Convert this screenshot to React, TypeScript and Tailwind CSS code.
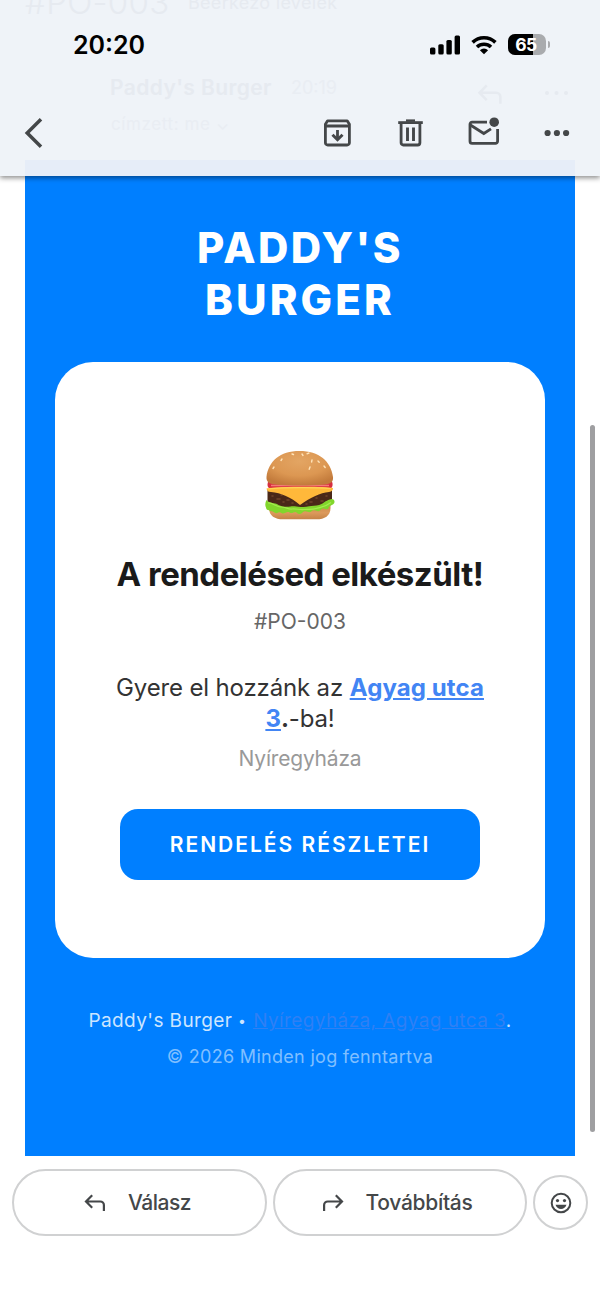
import React from "react";

const StatusIcons = () => (
  <div className="flex items-center">
    <svg width="30" height="20" viewBox="0 0 30 20" className="mr-[11px]">
      <rect x="0" y="12.5" width="5.4" height="7" rx="1.5" />
      <rect x="8.3" y="9.2" width="5.4" height="10.3" rx="1.5" />
      <rect x="16.4" y="5" width="5.4" height="14.5" rx="1.5" />
      <rect x="24.6" y="0.5" width="5.4" height="19" rx="1.5" />
    </svg>
    <svg width="26" height="20" viewBox="0 0 26 20" className="mr-[11px]">
      <g fill="none" stroke="#000" strokeWidth="3.6">
        <path d="M1.6 7.4a16.4 16.4 0 0 1 22.8 0" />
        <path d="M6 12a10.2 10.2 0 0 1 14 0" />
      </g>
      <path d="M13 19.2 8.9 15.2a5.9 5.9 0 0 1 8.2 0Z" />
    </svg>
    <div className="relative flex h-[21px] w-[38px] items-center justify-center overflow-hidden rounded-[7px] bg-[#a9abae]">
      <div className="absolute inset-y-0 left-0 w-[25px] bg-black" />
      <span className="relative right-[1px] text-[17.5px] leading-none font-bold tracking-[-0.5px] text-white">65</span>
    </div>
    <div className="ml-[2px] h-[7px] w-[2px] rounded-r-full bg-[#a9abae]" />
  </div>
);

const ArchiveIcon = () => (
  <svg width="32" height="32" viewBox="0 0 32 32" fill="none" stroke="#444749" strokeWidth="2.8">
    <path d="M3.4 7.3 5.6 3.8h19.6l2.2 3.5v18.400a2.300 2.300 0 0 1-2.300 2.300H5.700a2.300 2.300 0 0 1-2.300-2.300Z" strokeLinejoin="round" />
    <path d="M3.500 9h24M15.500 13v9.500" />
    <path d="m10.500 17.700 5 5 5-5" strokeWidth="3" />
  </svg>
);

const TrashIcon = () => (
  <svg width="32" height="32" viewBox="0 0 32 32" fill="none" stroke="#444749" strokeWidth="2.8">
    <path d="M3.2 5.600h24.600" />
    <path d="M11 3.600h9" strokeWidth="2.400" />
    <path d="M6.100 5.600v20.200a2.200 2.200 0 0 0 2.200 2.200h14.400a2.200 2.200 0 0 0 2.200-2.200V5.600" />
    <path d="M12.500 10.400v13.500M18.500 10.400v13.500" strokeWidth="2.900" />
  </svg>
);

const UnreadIcon = () => (
  <svg width="32" height="32" viewBox="0 0 32 32" fill="none" stroke="#444749" strokeWidth="2.8">
    <path d="M19 5.200H4.100a2.100 2.100 0 0 0-2.100 2.100v17a2.100 2.100 0 0 0 2.100 2.100h23.400a2.100 2.100 0 0 0 2.100-2.100V12" />
    <path d="M2.400 8 15.800 16.500 23 11.800" />
    <circle cx="26.200" cy="5.200" r="4.800" fill="#444749" stroke="none" />
  </svg>
);

const MoreIcon = () => (
  <svg width="32" height="32" viewBox="0 0 32 32" fill="#444749">
    <circle cx="6.6" cy="16" r="3.1" />
    <circle cx="15.9" cy="16" r="3.1" />
    <circle cx="25.1" cy="16" r="3.1" />
  </svg>
);

const ReplyIcon = ({ className = "" }: { className?: string }) => (
  <svg
    width="22"
    height="18"
    viewBox="0 0 22 18"
    fill="none"
    stroke="currentColor"
    strokeWidth="2.2"
    className={className}
  >
    <path d="M8.200 1.200 2 7.500l6.200 6.300M2 7.500h14.300a3.600 3.600 0 0 1 3.600 3.600v5.800" />
  </svg>
);

const Burger = () => (
  <svg width="72" height="72" viewBox="0 0 72 72">
    <defs>
      <radialGradient id="bun" cx="50%" cy="30%" r="70%">
        <stop offset="0" stopColor="#e3a563" />
        <stop offset="0.6" stopColor="#dc9752" />
        <stop offset="1" stopColor="#c27a3b" />
      </radialGradient>
      <linearGradient id="base" x1="0" y1="0" x2="0" y2="1">
        <stop offset="0" stopColor="#c98446" />
        <stop offset="0.6" stopColor="#dc9a5c" />
        <stop offset="1" stopColor="#c58345" />
      </linearGradient>
    </defs>
    <path d="M5 54h61.500v5c0 8-6 11.300-14 11.300H19C11 70.300 5 67 5 59Z" fill="url(#base)" />
    <path d="M3.500 40h64.500v12c0 4-4 6-10 6H14C8 58 3.500 56 3.500 52Z" fill="#4a2818" />
    <path
      d="M8 47h1M13 50h3M17 46h1M23 51h2M19 53h1M28 54h1M46 53h2M52 49h1M57 52h2M62 47h1M42 55h1"
      stroke="#70442b"
      strokeWidth="1.600"
      strokeLinecap="round"
    />
    <path
      d="M2.500 51c3 4 8 2 12 5 4 2 8 2 12 1.500 4-.5 6 .5 10 .5s8-.5 11-1 7-.5 10-2 5-4 10-5c3 0 4 3 2 5s-4 1-5 4-5-1-7 1-2 3-6 1.500-4 2.500-7 1.500-4-1.500-6 .5-4 2-6 0-4 2-7 0-5 2.500-8 .5-4 1.500-7-.5-3-1-5-2-3 0-3.500-3c-1-2-1-4 .5-7.500Z"
      fill="#82d62c"
    />
    <path d="M4 54c5-.5 8 4 13 4s7 2.500 11 2 8 1 12 .5 8 .5 12-1 8-.5 15-6" stroke="#a4eb4e" strokeWidth="1.200" fill="none" />
    <path d="M4.500 32h63c2 3 1 6-1 8H6c-3-2-3-5-1.500-8Z" fill="#d72e3f" />
    <path d="M7 36.500h58" stroke="#f57a78" strokeWidth="1.300" />
    <path d="M2.500 39.500C12 37.500 60 37 69 39c0 2-1 3.500-4 4-9 1-18 5-29 13-9-8-19-12-29-13-3 0-4-1-4.500-3.500Z" fill="#ffb83a" />
    <path d="M4 39.800c16-1.500 48-1.500 63-.3" stroke="#ffd457" strokeWidth="1.200" fill="none" />
    <path d="M2.500 28C4.500 12 16 2 35.500 2S67 12 69 28c.7 5-3 7-8 7.500-14 1.300-36 1.300-50 0-5-.5-9-2.500-8.500-7.500Z" fill="url(#bun)" />
    <path
      d="m18 10-1 1.500M28 5l1.500.5M38 5l1 1.500M45 4l-2 .8M54 12l1.200 1.200M10 18l-1 1.500M48 11l-.4 2M46 18l-.8 2.300M60 17l1.200 1.500"
      stroke="#ffe3b8"
      strokeWidth="1.400"
      strokeLinecap="round"
    />
  </svg>
);

const Header = () => (
  <header className="relative z-10 h-[176px] shrink-0 bg-[#eff3f8] shadow-[0_2px_5px_rgba(0,0,0,0.45)]">
    {/* message header showing through the translucent bar */}
    <div className="absolute inset-0 overflow-hidden text-[#e6eaf0]">
      <span className="absolute -top-[18px] left-[25px] text-[33px] leading-[40px] font-light tracking-[0.3px] whitespace-nowrap">
        #PO-003
      </span>
      <span className="absolute -top-[10px] left-[188px] text-[18px] leading-[26px] tracking-[0.3px] whitespace-nowrap">
        Beérkező levelek
      </span>
      <span className="absolute top-[74px] left-[110px] text-[21px] leading-[28px] font-semibold tracking-[0.4px] whitespace-nowrap">
        Paddy's Burger
      </span>
      <span className="absolute top-[75px] left-[291px] text-[18px] leading-[26px] whitespace-nowrap text-[#e9edf3]">20:19</span>
      <span className="absolute top-[111px] left-[111px] text-[17px] leading-[26px] tracking-[0.6px] whitespace-nowrap text-[#e9edf3]">
        címzett: me ⌄
      </span>
      <ReplyIcon className="absolute top-[84px] left-[476px] h-[21px] w-[28px]" />
      <svg className="absolute top-[88px] left-[544px]" width="26" height="10" viewBox="0 0 26 10" fill="currentColor">
        <circle cx="3" cy="5" r="2" />
        <circle cx="12.500" cy="5" r="2" />
        <circle cx="22" cy="5" r="2" />
      </svg>
      <div className="absolute inset-x-[25px] bottom-0 h-[16px] bg-[#e6edf8]" />
    </div>
    <div className="relative flex h-[89px] items-center justify-between pr-[50px] pl-[73px]">
      <span className="text-[25px] leading-[30px] font-semibold text-black">20:20</span>
      <StatusIcons />
    </div>
    <div className="relative flex h-[88px] items-center justify-between pr-[27px] pl-[24px]">
      <svg width="20" height="32" viewBox="0 0 20 32" fill="none" stroke="#444749" strokeWidth="3.500">
        <path d="M17 2.200 3.200 16 17 29.800" />
      </svg>
      <div className="flex gap-[41px]">
        <ArchiveIcon />
        <TrashIcon />
        <UnreadIcon />
        <MoreIcon />
      </div>
    </div>
  </header>
);

const Message = () => (
  <main className="mx-[25px] flex h-[980px] shrink-0 flex-col items-center bg-[#007fff] px-[30px] pt-[46px] text-center">
    <h1 className="text-[42px] leading-[52px] font-extrabold tracking-[2.4px] text-white">
      PADDY'S
      <br />
      <span className="tracking-[3.1px]">BURGER</span>
    </h1>
    <section className="mt-[36px] flex h-[596px] w-full flex-col items-center rounded-[38px] bg-white pt-[87px]">
      <Burger />
      <h2 className="mt-[32px] text-[33px] leading-[42px] font-bold tracking-[-0.5px] whitespace-nowrap text-[#1a1a1a]">
        A rendelésed elkészült!
      </h2>
      <p className="mt-[11px] text-[21px] leading-[32px] text-[#666]">#PO-003</p>
      <p className="mt-[34px] text-[24px] leading-[31px] tracking-[-0.15px] whitespace-nowrap text-[#333]">
        Gyere el hozzánk az{" "}
        <a href="#" className="font-bold tracking-[0.1px] text-[#4285f4] underline">
          Agyag utca
          <br />3
        </a>
        <b>.</b>-ba!
      </p>
      <p className="mt-[9px] text-[21px] leading-[32px] tracking-[-0.2px] text-[#999]">Nyíregyháza</p>
      <button className="mt-[34px] h-[71px] w-[360px] rounded-[18px] bg-[#007fff] text-[21px] font-semibold tracking-[2px] text-white">
        RENDELÉS RÉSZLETEI
      </button>
    </section>
    <footer className="mt-[48px] whitespace-nowrap">
      <p className="text-[19px] leading-[30px] tracking-[0.4px] text-[#cce5ff]">
        Paddy's Burger <span className="align-[1.5px] text-[14px] leading-none">•</span>{" "}
        <a href="#" className="ml-[1px] text-[#2f80f4] underline">
          Nyíregyháza, Agyag utca 3
        </a>
        .
      </p>
      <p className="mt-[6px] text-[18px] leading-[30px] tracking-[0.3px] text-[#80bfff]">© 2026 Minden jog fenntartva</p>
    </footer>
  </main>
);

const Actions = () => (
  <div className="flex items-center gap-[6px] pt-[13px] pl-[12px] text-[21px] font-medium tracking-[-0.5px] text-[#444749]">
    <button className="flex h-[67px] w-[255px] items-center justify-center gap-[22px] rounded-full border-2 border-[#d0d1d2] pr-[4px]">
      <ReplyIcon />
      <span>Válasz</span>
    </button>
    <button className="flex h-[67px] w-[254px] items-center justify-center gap-[22px] rounded-full border-2 border-[#d0d1d2] pr-[6px]">
      <ReplyIcon className="-scale-x-100" />
      <span className="tracking-[-0.3px]">Továbbítás</span>
    </button>
    <button className="flex h-[55px] w-[55px] items-center justify-center rounded-full border-2 border-[#d0d1d2]">
      <svg width="22" height="22" viewBox="0 0 22 22" fill="#444749">
        <circle cx="11" cy="11" r="9.300" fill="none" stroke="#444749" strokeWidth="2" />
        <circle cx="7.500" cy="8.600" r="1.600" />
        <circle cx="14.500" cy="8.600" r="1.600" />
        <path d="M5.500 12.800h11c-.8 2.500-2.900 4.200-5.500 4.200s-4.700-1.700-5.500-4.200Z" />
      </svg>
    </button>
  </div>
);

const App = () => {
  return (
    <div className="relative flex h-[1300px] w-[600px] flex-col overflow-hidden bg-white font-['Inter',sans-serif]">
      <Header />
      <Message />
      <Actions />
      <div className="absolute top-[425px] right-[5px] h-[707px] w-[5px] rounded-full bg-[#9f9fa1]" />
    </div>
  );
};

export default App;
